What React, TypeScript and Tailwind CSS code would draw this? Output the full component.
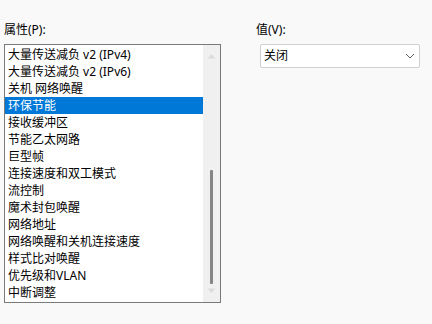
import React from "react";

const items = [
  "大量传送减负 v2 (IPv4)",
  "大量传送减负 v2 (IPv6)",
  "关机 网络唤醒",
  "环保节能",
  "接收缓冲区",
  "节能乙太网路",
  "巨型帧",
  "连接速度和双工模式",
  "流控制",
  "魔术封包唤醒",
  "网络地址",
  "网络唤醒和关机连接速度",
  "样式比对唤醒",
  "优先级和VLAN",
  "中断调整",
];

export default function App() {
  return (
    <div
      className="w-[432px] h-[324px] bg-[#f9f9f9] flex pt-[22px] pl-[4px] text-[12px] text-black"
      style={{ fontFamily: '"Noto Sans", "Noto Sans CJK SC", sans-serif' }}
    >
      <div className="w-[217px] flex flex-col">
        <div className="h-[16px] leading-[16px]">属性(P):</div>
        <div className="mt-[6px] h-[259px] border border-[#7a7a7a] bg-white flex">
          <div className="flex-1 pt-[1px] flex flex-col">
            {items.map((t, i) => (
              <div
                key={i}
                className={
                  "h-[17px] leading-[17px] pl-[3px] whitespace-nowrap " +
                  (i === 3 ? "bg-[#0078d7] text-white" : "")
                }
              >
                {t}
              </div>
            ))}
          </div>
          <div className="w-[17px] bg-[#f0f0f0] flex flex-col items-center">
            <svg width="9" height="6" viewBox="0 0 9 6" className="mt-[8px]">
              <path d="M0.5 5.5 L4.5 1 L8.5 5.5 Z" fill="#dcdcdc" />
            </svg>
            <div className="mt-[111px] w-[3px] h-[114px] bg-[#858585] rounded-[1px]" />
            <svg width="9" height="6" viewBox="0 0 9 6" className="mt-[4px]">
              <path d="M0.5 0.5 L4.5 5 L8.5 0.5 Z" fill="#dcdcdc" />
            </svg>
          </div>
        </div>
      </div>
      <div className="ml-[35px] flex flex-col">
        <div className="h-[16px] leading-[16px]">值(V):</div>
        <div className="mt-[6px] ml-[4px] w-[160px] h-[24px] border border-[#cfcfcf] rounded-[2px] bg-white flex items-center justify-between pl-[3px] pr-[4px]">
          <span className="leading-[16px]">关闭</span>
          <svg width="10" height="6" viewBox="0 0 10 6">
            <path d="M1 1 L5 5 L9 1" fill="none" stroke="#606060" strokeWidth="1" />
          </svg>
        </div>
      </div>
    </div>
  );
}
